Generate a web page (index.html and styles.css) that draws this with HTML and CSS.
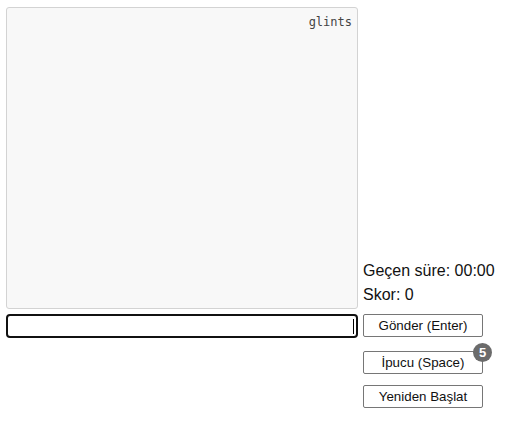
FILE: index.html
```html
<!DOCTYPE html>
<html lang="tr">
<head>
<meta charset="utf-8">
<title>glints</title>
<link rel="stylesheet" href="styles.css">
</head>
<body>
<div class="game">
  <div class="board"><span class="label">glints</span></div>
  <div class="stats">
    <div>Geçen süre: 00:00</div>
    <div>Skor: 0</div>
  </div>
  <div class="field"><input class="guess" type="text"><span class="caret"></span></div>
  <div class="actions">
    <button class="btn">Gönder (Enter)</button>
    <button class="btn hint">İpucu (Space)<span class="badge">5</span></button>
    <button class="btn restart">Yeniden Başlat</button>
  </div>
</div>
</body>
</html>
```
FILE: styles.css
```css
html, body {
  margin: 0;
  background: #fff;
}
.game {
  display: grid;
  grid-template-columns: 352px 120px;
  column-gap: 5px;
  row-gap: 5px;
  padding: 7px 0 0 6px;
  align-items: start;
}
.board {
  width: 350px;
  height: 300px;
  background: #f8f8f8;
  border: 1px solid #d3d3d3;
  border-radius: 3px;
  display: flex;
  justify-content: flex-end;
  align-items: flex-start;
}
.label {
  font-family: "DejaVu Sans Mono", "Liberation Mono", monospace;
  font-size: 12px;
  color: #444;
  padding: 7px 5px 0 0;
}
.stats {
  align-self: end;
  white-space: nowrap;
  font-family: "Liberation Sans", Arial, sans-serif;
  font-size: 16px;
  line-height: 24px;
  color: #111;
  padding-bottom: 2px;
}
.field {
  position: relative;
  width: 352px;
}
.guess {
  box-sizing: border-box;
  width: 352px;
  height: 24px;
  margin: 0;
  border: 2px solid #111;
  border-radius: 4px;
  background: #fff;
  outline: none;
  padding: 0 4px;
}
.caret {
  position: absolute;
  right: 4px;
  top: 5px;
  width: 1px;
  height: 15px;
  background: #000;
}
.actions {
  display: flex;
  flex-direction: column;
  align-items: flex-start;
}
.btn {
  position: relative;
  box-sizing: border-box;
  width: 120px;
  height: 23px;
  margin: 0;
  padding: 0;
  border: 1px solid #767676;
  border-radius: 2px;
  background: #fff;
  font-family: "Liberation Sans", Arial, sans-serif;
  font-size: 13.33px;
  color: #111;
}
.hint {
  margin-top: 14px;
}
.restart {
  margin-top: 11px;
}
.badge {
  position: absolute;
  right: -10px;
  top: -9px;
  width: 19px;
  height: 19px;
  border-radius: 50%;
  background: #6b6b6b;
  color: #fff;
  font-weight: bold;
  font-size: 13px;
  line-height: 19px;
  text-align: center;
}
```
